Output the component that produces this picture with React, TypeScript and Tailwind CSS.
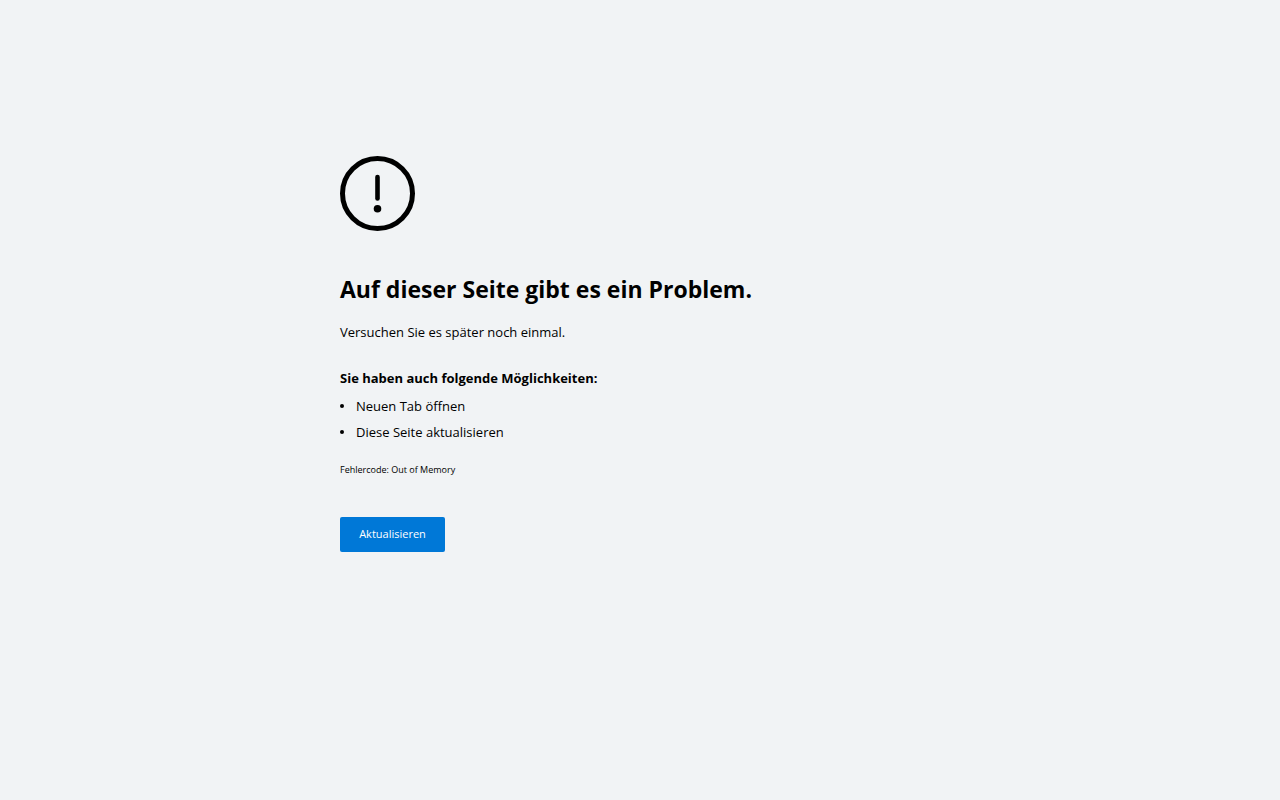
function ErrorIcon() {
  return (
    <svg viewBox="0 0 75 75" fill="none" aria-hidden="true" className="size-[75px]">
      <circle cx="37.5" cy="37.5" r="35" stroke="currentColor" strokeWidth="5" />
      <path d="M37.5 21v21.5" stroke="currentColor" strokeWidth="4.6" strokeLinecap="round" />
      <circle cx="37.5" cy="52.8" r="3.8" fill="currentColor" />
    </svg>
  );
}

const suggestions = ["Neuen Tab öffnen", "Diese Seite aktualisieren"];

function App() {
  return (
    <main className="min-h-screen bg-[#f1f3f5] px-5 pt-39 pb-12 font-['Open_Sans',sans-serif] text-black">
      <div className="mx-auto max-w-[600px]">
        <ErrorIcon />

        <h1 className="mt-10 text-[23px] leading-9 font-bold">
          Auf dieser Seite gibt es ein Problem.
        </h1>
        <p className="mt-[15px] text-[13px] leading-5">
          Versuchen Sie es später noch einmal.
        </p>

        <h2 className="mt-[26px] text-[13px] leading-5 font-bold">
          Sie haben auch folgende Möglichkeiten:
        </h2>
        <ul className="mt-2 space-y-1.5 text-[13px] leading-5">
          {suggestions.map((item) => (
            <li key={item} className="flex items-center gap-3">
              <span className="size-1 rounded-full bg-black" />
              {item}
            </li>
          ))}
        </ul>

        <p className="mt-5 text-[9px] leading-4">Fehlercode: Out of Memory</p>

        <button
          type="button"
          className="mt-[39px] h-[35px] w-[105px] rounded-xs bg-[#0078d7] text-[11px] text-white"
        >
          Aktualisieren
        </button>
      </div>
    </main>
  );
}

export default App;
